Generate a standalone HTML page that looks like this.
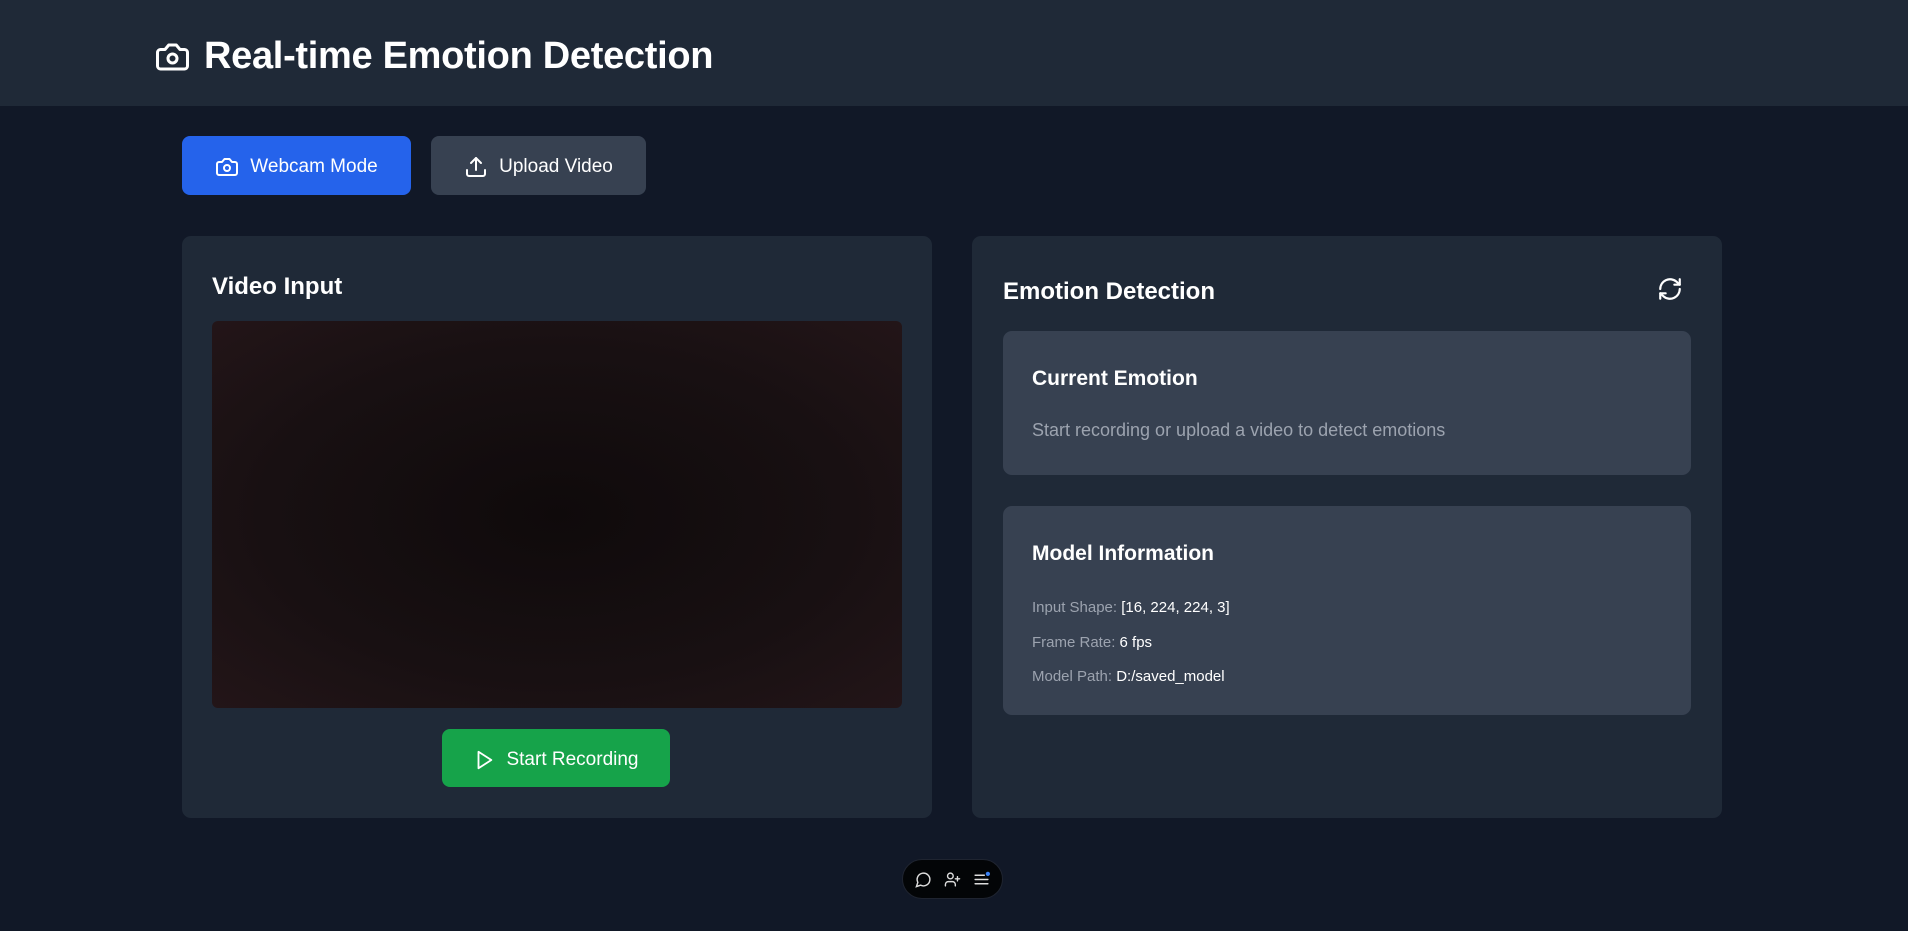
<!DOCTYPE html>
<html><head><meta charset="utf-8"><style>
*{box-sizing:border-box;margin:0;padding:0}
body{width:1908px;height:931px;background:#111827;font-family:"Liberation Sans",sans-serif;color:#fff;position:relative;overflow:hidden}
.hdr{position:absolute;left:0;top:0;width:1908px;height:106px;background:#1f2937}
.title{position:absolute;left:153px;top:35px;font-size:38px;font-weight:bold;display:flex;align-items:center;gap:12px;letter-spacing:-0.3px}
.btn{position:absolute;height:59px;border-radius:8px;display:flex;align-items:center;justify-content:center;gap:11px;font-size:19px;padding-top:3px}
.card{position:absolute;top:236px;width:750px;height:582px;background:#1f2937;border-radius:9px}
.h{position:absolute;font-size:24px;font-weight:bold}
.box{position:absolute;left:31px;width:688px;background:#374151;border-radius:9px}
.gray{color:#9ca3af}
svg{display:block}
</style></head><body>
<div class="hdr"></div>
<div class="title"><svg width="39" height="36" viewBox="0 0 24 24" fill="none" stroke="#fff" stroke-width="2" stroke-linecap="round" stroke-linejoin="round"><path d="M14.5 4h-5L7 7H4a2 2 0 0 0-2 2v9a2 2 0 0 0 2 2h16a2 2 0 0 0 2-2V9a2 2 0 0 0-2-2h-3l-2.5-3z"/><circle cx="12" cy="13" r="3"/></svg>Real-time Emotion Detection</div>

<div class="btn" style="left:182px;top:136px;width:229px;background:#2563eb"><svg width="24" height="24" viewBox="0 0 24 24" fill="none" stroke="#fff" stroke-width="2" stroke-linecap="round" stroke-linejoin="round"><path d="M14.5 4h-5L7 7H4a2 2 0 0 0-2 2v9a2 2 0 0 0 2 2h16a2 2 0 0 0 2-2V9a2 2 0 0 0-2-2h-3l-2.5-3z"/><circle cx="12" cy="13" r="3"/></svg>Webcam Mode</div>
<div class="btn" style="left:431px;top:136px;width:215px;background:#374151"><svg width="24" height="24" viewBox="0 0 24 24" fill="none" stroke="#fff" stroke-width="2" stroke-linecap="round" stroke-linejoin="round"><path d="M21 15v4a2 2 0 0 1-2 2H5a2 2 0 0 1-2-2v-4"/><path d="M17 8l-5-5-5 5"/><path d="M12 3v12"/></svg>Upload Video</div>

<div class="card" style="left:182px">
 <div class="h" style="left:30px;top:37px">Video Input</div>
 <div style="position:absolute;left:30px;top:85px;width:690px;height:387px;border-radius:6px;background:radial-gradient(ellipse at 50% 50%,#0f0a0b 0%,#181012 60%,#231518 100%)"></div>
 <div class="btn" style="left:260px;top:493px;width:228px;height:58px;background:#16a34a"><svg width="22" height="22" viewBox="0 0 24 24" fill="none" stroke="#fff" stroke-width="2" stroke-linejoin="round"><path d="M6 3l14 9-14 9z"/></svg>Start Recording</div>
</div>

<div class="card" style="left:972px">
 <div class="h" style="left:31px;top:42px">Emotion Detection</div>
 <svg style="position:absolute;left:685px;top:40px" width="26" height="26" viewBox="0 0 24 24" fill="none" stroke="#fff" stroke-width="2" stroke-linecap="round" stroke-linejoin="round"><path d="M3 12a9 9 0 0 1 15-6.7L21 8"/><path d="M21 3v5h-5"/><path d="M21 12a9 9 0 0 1-15 6.7L3 16"/><path d="M8 16H3v5"/></svg>
 <div class="box" style="top:95px;height:144px">
  <div style="position:absolute;left:29px;top:36px;font-size:21px;font-weight:bold">Current Emotion</div>
  <div class="gray" style="position:absolute;left:29px;top:89px;font-size:18px">Start recording or upload a video to detect emotions</div>
 </div>
 <div class="box" style="top:270px;height:209px">
  <div style="position:absolute;left:29px;top:36px;font-size:21px;font-weight:bold">Model Information</div>
  <div style="position:absolute;left:29px;top:85px;font-size:15px;line-height:34.5px"><span class="gray">Input Shape:</span> [16, 224, 224, 3]<br><span class="gray">Frame Rate:</span> 6 fps<br><span class="gray">Model Path:</span> D:/saved_model</div>
 </div>
</div>

<div style="position:absolute;left:902px;top:859px;width:101px;height:40px;border-radius:20px;background:#030507;border:1px solid #1f2430;display:flex;align-items:center;justify-content:center;gap:12px">
 <svg width="17" height="17" viewBox="0 0 24 24" fill="none" stroke="#ddd" stroke-width="2"><path d="M7.9 20A9 9 0 1 0 4 16.1L2 22z"/></svg>
 <svg width="17" height="17" viewBox="0 0 24 24" fill="none" stroke="#ddd" stroke-width="2" stroke-linecap="round"><circle cx="9" cy="7" r="4"/><path d="M2 21v-2a4 4 0 0 1 4-4h6a4 4 0 0 1 4 4v2"/><path d="M19 8v6M22 11h-6"/></svg>
 <svg width="17" height="17" viewBox="0 0 24 24" fill="none" stroke="#ddd" stroke-width="2" stroke-linecap="round"><path d="M3 6h13M3 12h18M3 18h18"/><circle cx="21" cy="4" r="3" fill="#3b82f6" stroke="none"/></svg>
</div>
</body></html>
